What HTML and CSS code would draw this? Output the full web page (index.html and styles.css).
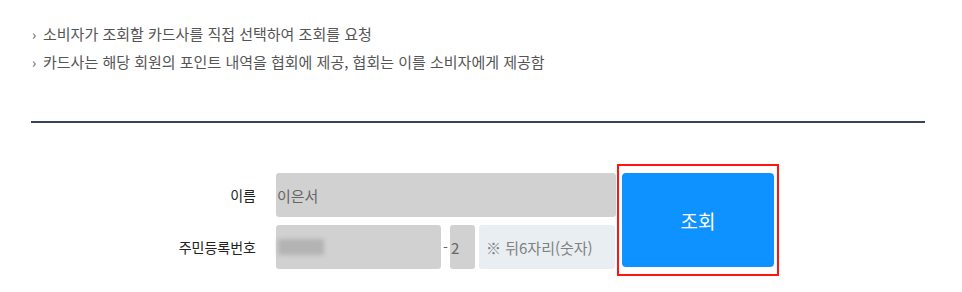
FILE: index.html
```html
<!DOCTYPE html>
<html lang="ko">
<head>
<meta charset="utf-8">
<link rel="stylesheet" href="styles.css">
</head>
<body>
<div class="page">
  <ul class="notes">
    <li><span class="arrow">›</span>소비자가 조회할 카드사를 직접 선택하여 조회를 요청</li>
    <li><span class="arrow">›</span>카드사는 해당 회원의 포인트 내역을 협회에 제공, 협회는 이를 소비자에게 제공함</li>
  </ul>
  <div class="divider"></div>
  <div class="form">
    <div class="fields">
      <div class="row">
        <div class="label">이름</div>
        <div class="input name">이은서</div>
      </div>
      <div class="row">
        <div class="label">주민등록번호</div>
        <div class="input rrn1"><span class="blur"></span></div>
        <div class="dash">-</div>
        <div class="input rrn2">2</div>
        <div class="hint">※ 뒤6자리(숫자)</div>
      </div>
    </div>
    <div class="highlight">
      <button class="btn">조회</button>
    </div>
  </div>
</div>
</body>
</html>
```
FILE: styles.css
```css
* { box-sizing: border-box; }
body {
  margin: 0;
  background: #fff;
  font-family: "Noto Sans CJK KR", "Noto Sans", sans-serif;
  color: #333;
}
.page {
  width: 894px;
  margin-left: 31px;
}
.notes {
  list-style: none;
  margin: 0;
  padding: 20px 0 0 0;
}
.notes li {
  font-size: 15px;
  line-height: 28px;
  color: #555;
}
.arrow {
  display: inline-block;
  width: 12px;
  padding-left: 1px;
  font-size: 14px;
  color: #555;
}
.divider {
  margin-top: 45px;
  height: 2px;
  background: #3a4259;
}
.form {
  display: flex;
  margin-top: 41px;
}
.fields {
  display: flex;
  flex-direction: column;
  gap: 8px;
  padding-top: 9px;
}
.row {
  display: flex;
  align-items: center;
  height: 44px;
}
.label {
  width: 245px;
  padding-right: 20px;
  text-align: right;
  font-size: 14px;
  color: #222;
}
.input {
  height: 44px;
  background: #d1d1d1;
  border-radius: 3px;
  display: flex;
  align-items: center;
  font-size: 15px;
  color: #666;
}
.name {
  width: 340px;
  padding-left: 1px;
}
.rrn1 {
  width: 165px;
}
.blur {
  display: block;
  width: 46px;
  height: 16px;
  margin-left: 2px;
  background: #b3b3b3;
  filter: blur(2px);
}
.dash {
  width: 9px;
  text-align: center;
  font-size: 14px;
  color: #666;
}
.rrn2 {
  width: 25px;
  padding-left: 1px;
}
.hint {
  width: 136px;
  height: 44px;
  margin-left: 4px;
  background: #e9eef3;
  border-radius: 3px;
  display: flex;
  align-items: center;
  padding-left: 7px;
  font-size: 15px;
  color: #808080;
}
.highlight {
  margin-left: 1px;
  border: 2px solid #ff1414;
  padding: 7px 3px 7px 3px;
}
.btn {
  display: block;
  width: 152px;
  height: 94px;
  border: 0;
  border-radius: 4px;
  background: #0e92ff;
  color: #fff;
  font-family: "Noto Sans CJK KR", "Noto Sans", sans-serif;
  font-size: 19px;
  padding: 0;
}
```
